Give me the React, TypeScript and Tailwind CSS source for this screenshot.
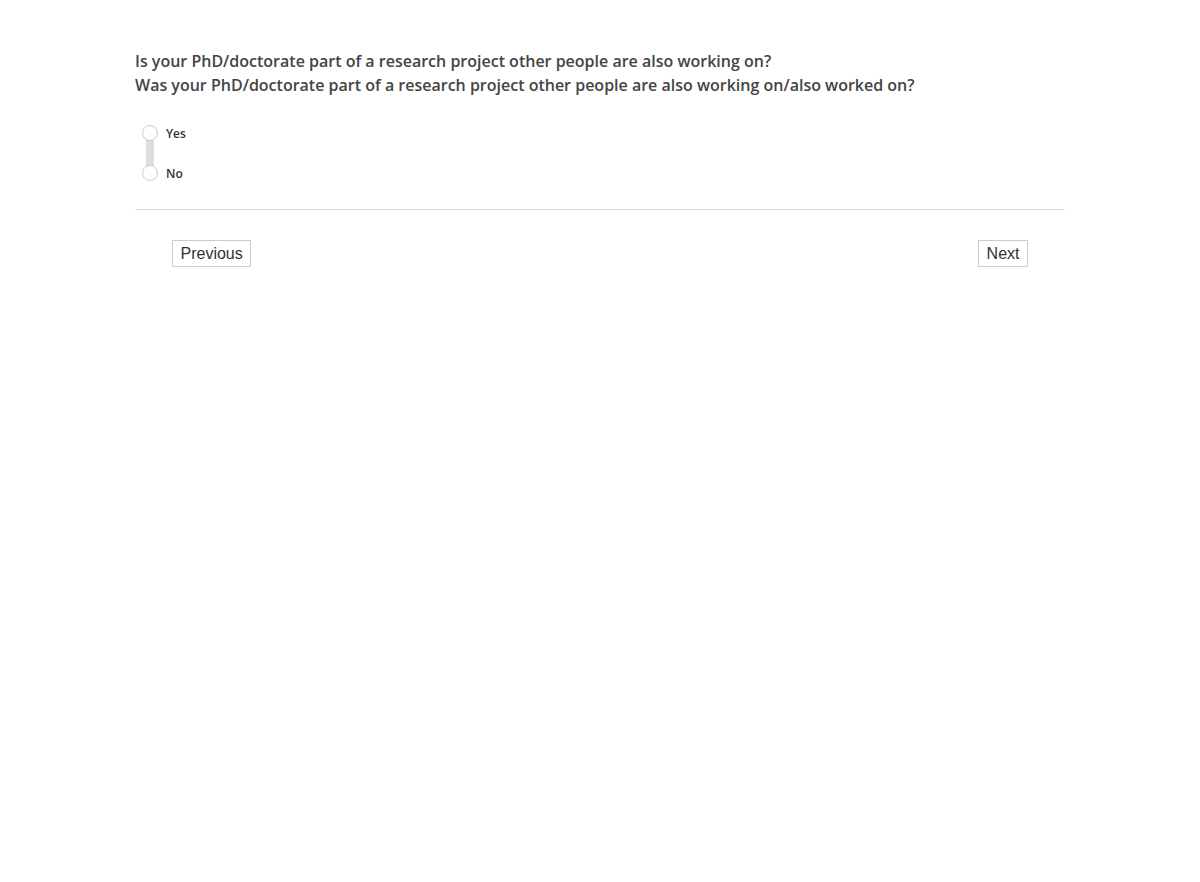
import React from "react";

export default function App() {
  return (
    <div className="min-h-[882px] bg-white" style={{ fontFamily: '"Open Sans", sans-serif' }}>
      <div className="ml-[135px] w-[930px] pt-[49px]">
        <div className="text-[16px] leading-[24px] font-semibold text-[#444444]">
          <div>Is your PhD/doctorate part of a research project other people are also working on?</div>
          <div>Was your PhD/doctorate part of a research project other people are also working on/also worked on?</div>
        </div>
        <div className="relative mt-[29px] ml-[7px] flex flex-col gap-[24px]">
          <div className="absolute left-[4px] top-[13px] h-[28px] w-[8px] bg-[#dddddd]" />
          <label className="relative flex items-center h-[16px]">
            <span className="relative -top-[1px] w-[16px] h-[16px] rounded-full border border-[#cccccc] bg-white" />
            <span className="ml-[8px] text-[12px] font-semibold text-[#333333]">Yes</span>
          </label>
          <label className="relative flex items-center h-[16px]">
            <span className="relative -top-[1px] w-[16px] h-[16px] rounded-full border border-[#cccccc] bg-white" />
            <span className="ml-[8px] text-[12px] font-semibold text-[#333333]">No</span>
          </label>
        </div>
        <div className="mt-[27px] h-px bg-[#dddddd]" />
        <div className="mt-[30px] flex justify-between px-[37px]" style={{ fontFamily: '"Liberation Sans", Arial, sans-serif' }}>
          <button className="h-[27px] px-[7.5px] border border-[#cccccc] bg-white text-[16px] text-[#333333] leading-none">Previous</button>
          <button className="h-[27px] px-[7.5px] border border-[#cccccc] bg-white text-[16px] text-[#333333] leading-none">Next</button>
        </div>
      </div>
    </div>
  );
}
